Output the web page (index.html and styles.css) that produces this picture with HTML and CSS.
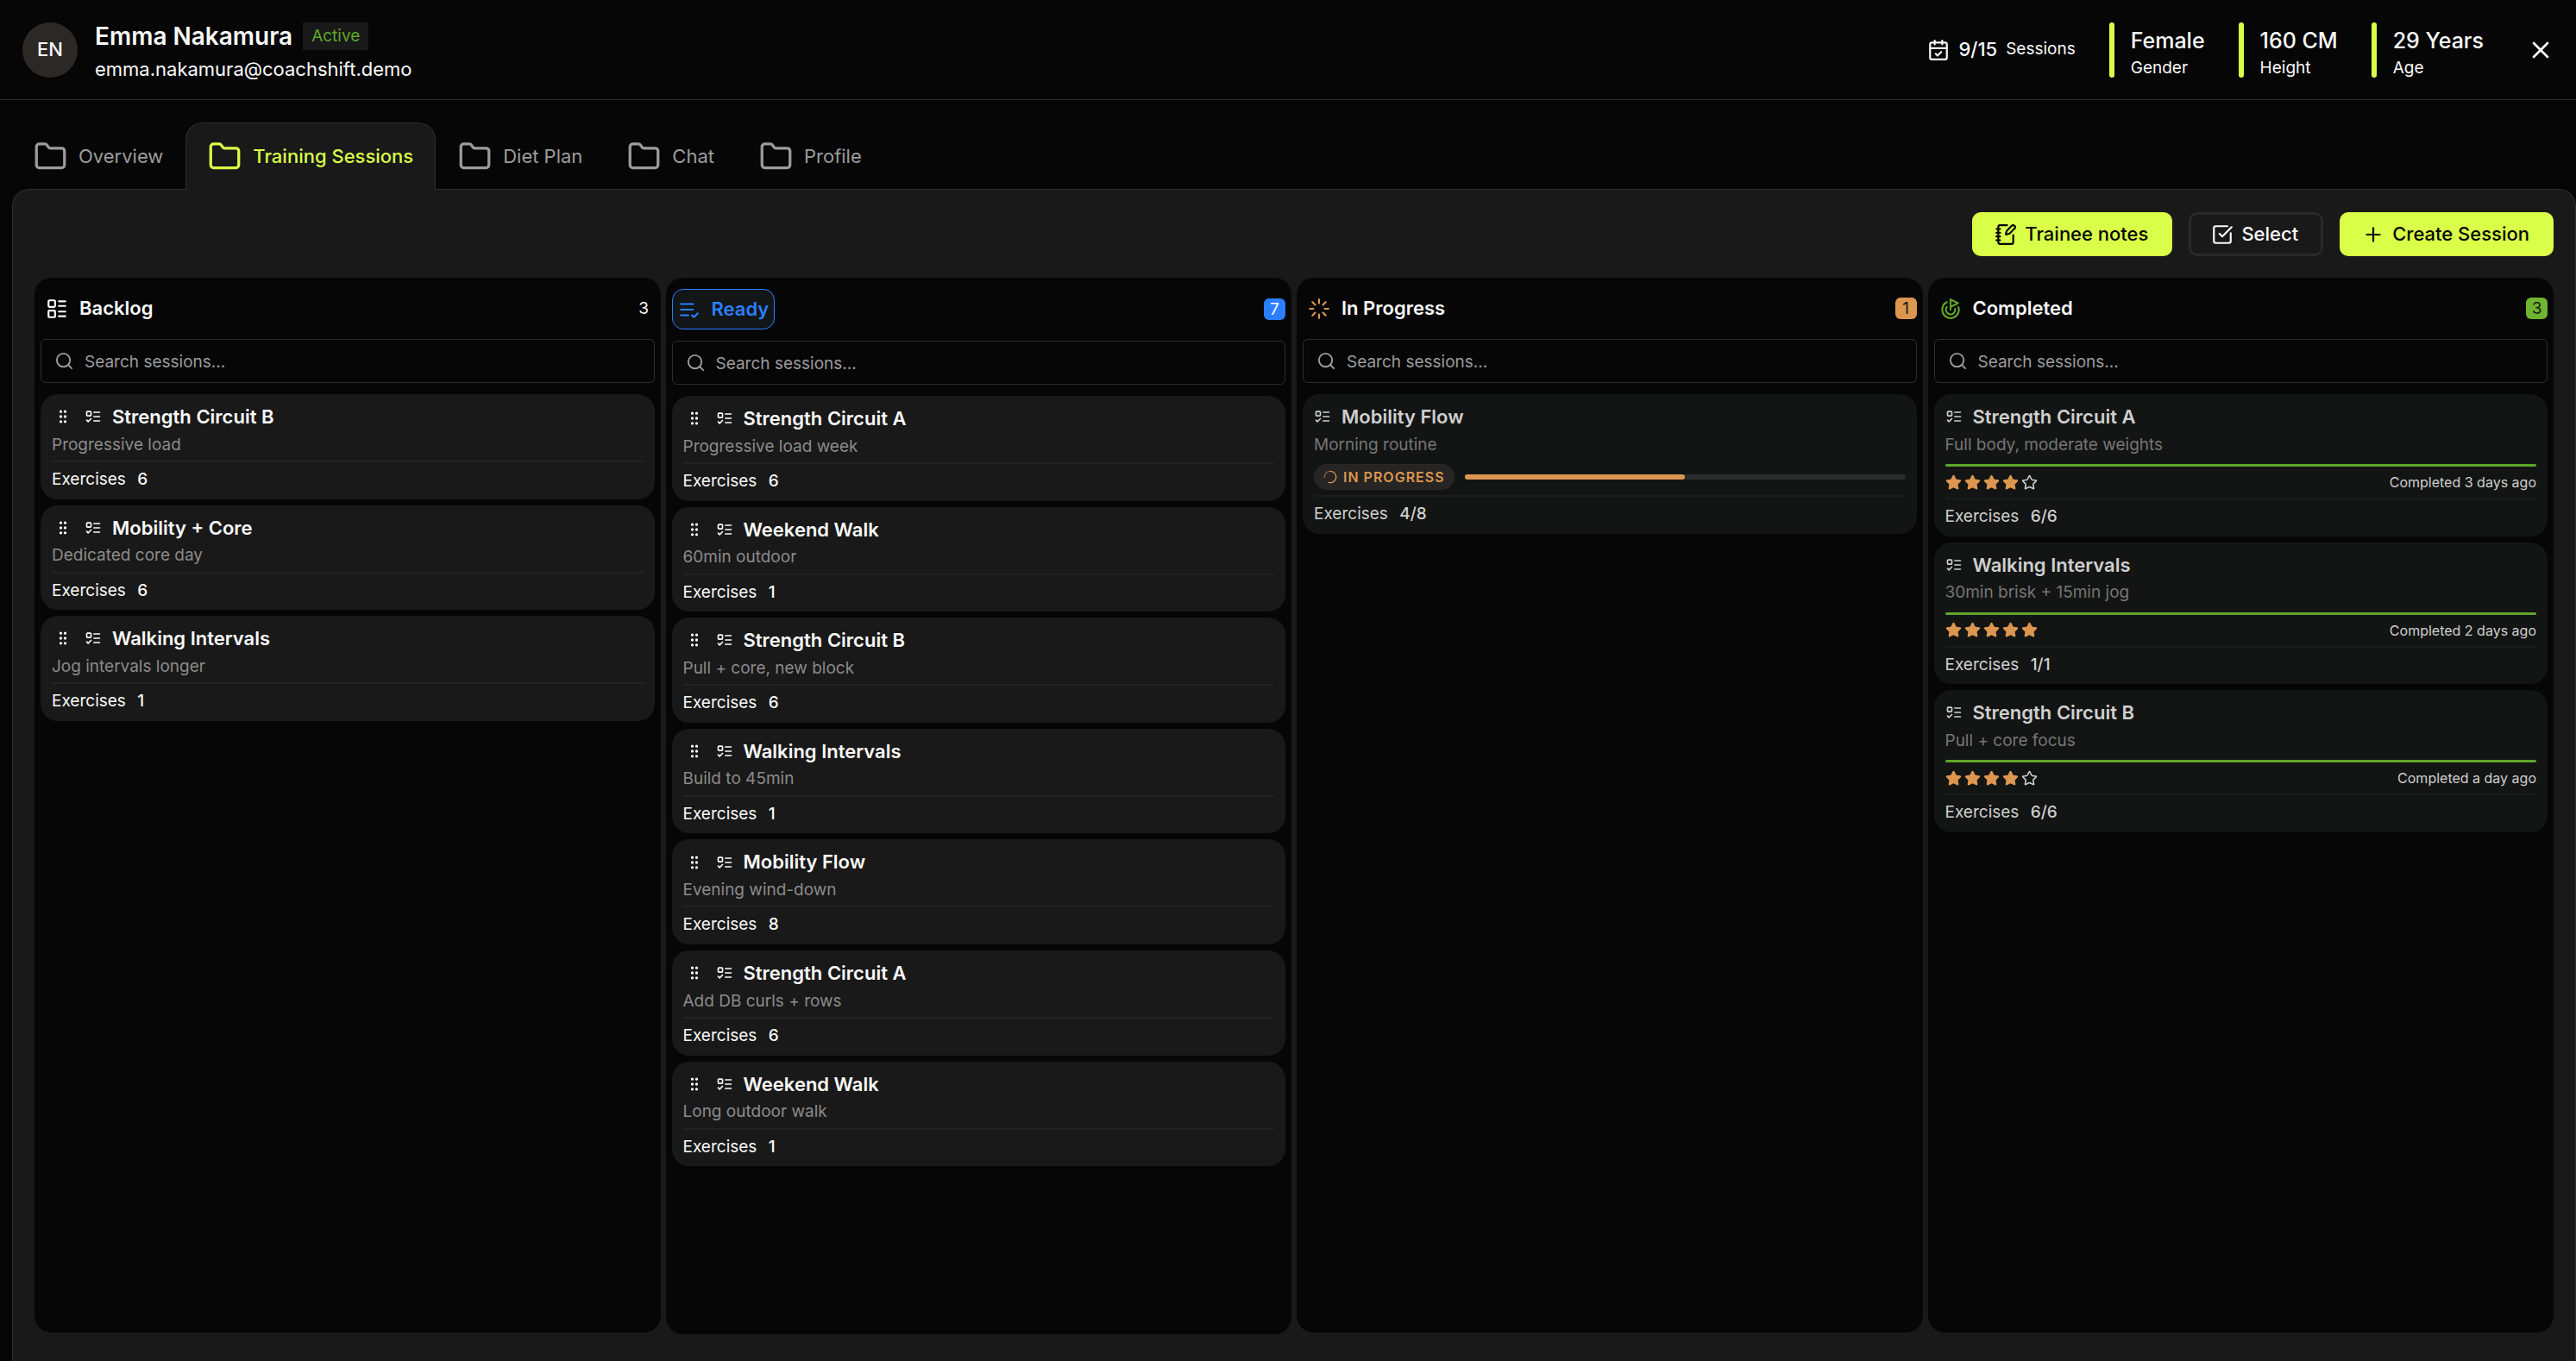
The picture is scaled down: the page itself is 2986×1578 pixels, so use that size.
FILE: index.html
```html
<!DOCTYPE html>
<html lang="en">
<head>
    <meta charset="UTF-8">
    <meta name="viewport" content="width=device-width, initial-scale=1.0">
    <title>Emma Nakamura - Training Sessions</title>
    <link rel="stylesheet" href="styles.css">
</head>
<body>
    <!-- shared icons -->
    <svg class="sprite" aria-hidden="true">
        <symbol id="i-folder" viewBox="0 0 24 24"><path d="M20 20a2 2 0 0 0 2-2V8a2 2 0 0 0-2-2h-7.900a2 2 0 0 1-1.690-.900L9.600 3.900A2 2 0 0 0 7.930 3H4a2 2 0 0 0-2 2v13a2 2 0 0 0 2 2Z"/></symbol>
        <symbol id="i-search" viewBox="0 0 24 24"><circle cx="11" cy="11" r="8"/><path d="m21 21-4.300-4.300"/></symbol>
        <symbol id="i-grip" viewBox="0 0 24 24"><circle cx="9" cy="12" r="1"/><circle cx="9" cy="5" r="1"/><circle cx="9" cy="19" r="1"/><circle cx="15" cy="12" r="1"/><circle cx="15" cy="5" r="1"/><circle cx="15" cy="19" r="1"/></symbol>
        <symbol id="i-todo" viewBox="0 0 24 24"><rect x="3" y="5" width="6" height="6" rx="1"/><path d="m3 17 2 2 4-4"/><path d="M13 6h8"/><path d="M13 12h8"/><path d="M13 18h8"/></symbol>
        <symbol id="i-star" viewBox="0 0 24 24"><path d="M11.525 2.295a.53.53 0 0 1 .95 0l2.310 4.679a2.123 2.123 0 0 0 1.595 1.160l5.166.756a.53.53 0 0 1 .294.904l-3.736 3.638a2.123 2.123 0 0 0-.611 1.878l.882 5.140a.53.53 0 0 1-.771.560l-4.618-2.428a2.122 2.122 0 0 0-1.973 0L6.396 21.010a.53.53 0 0 1-.770-.560l.881-5.139a2.122 2.122 0 0 0-.611-1.879L2.160 9.795a.53.53 0 0 1 .294-.906l5.165-.755a2.122 2.122 0 0 0 1.597-1.160z"/></symbol>
    </svg>

    <header class="header">
        <div class="avatar">EN</div>
        <div class="person">
            <div class="person-top">
                <h1>Emma Nakamura</h1>
                <span class="status">Active</span>
            </div>
            <p class="email">emma.nakamura@coachshift.demo</p>
        </div>
        <div class="stats">
            <div class="session-count">
                <svg class="icon" viewBox="0 0 24 24"><path d="M8 2v4"/><path d="M16 2v4"/><rect width="18" height="18" x="3" y="4" rx="2"/><path d="M3 10h18"/><path d="m9 16 2 2 4-4"/></svg>
                <strong>9/15</strong>
                <span>Sessions</span>
            </div>
            <div class="stat"><strong>Female</strong><span>Gender</span></div>
            <div class="stat"><strong>160 CM</strong><span>Height</span></div>
            <div class="stat"><strong>29 Years</strong><span>Age</span></div>
        </div>
        <button class="close" type="button" aria-label="Close">
            <svg class="icon" viewBox="0 0 24 24"><path d="M18 6 6 18"/><path d="m6 6 12 12"/></svg>
        </button>
    </header>

    <nav class="tabs">
        <a class="tab" href="#"><svg class="icon"><use href="#i-folder"/></svg>Overview</a>
        <a class="tab active" href="#"><svg class="icon"><use href="#i-folder"/></svg>Training Sessions</a>
        <a class="tab" href="#"><svg class="icon"><use href="#i-folder"/></svg>Diet Plan</a>
        <a class="tab" href="#"><svg class="icon"><use href="#i-folder"/></svg>Chat</a>
        <a class="tab" href="#"><svg class="icon"><use href="#i-folder"/></svg>Profile</a>
    </nav>

    <main class="panel">
        <div class="actions">
            <button class="btn primary" type="button">
                <svg class="icon" viewBox="0 0 24 24"><path d="M13.400 2H6a2 2 0 0 0-2 2v16a2 2 0 0 0 2 2h12a2 2 0 0 0 2-2v-7.400"/><path d="M2 6h4"/><path d="M2 10h4"/><path d="M2 14h4"/><path d="M2 18h4"/><path d="M21.378 5.626a1 1 0 1 0-3.004-3.004l-5.010 5.012a2 2 0 0 0-.506.854l-.837 2.870a.5.5 0 0 0 .620.620l2.870-.837a2 2 0 0 0 .854-.506z"/></svg>
                Trainee notes
            </button>
            <button class="btn outline" type="button">
                <svg class="icon" viewBox="0 0 24 24"><path d="M21 10.500V19a2 2 0 0 1-2 2H5a2 2 0 0 1-2-2V5a2 2 0 0 1 2-2h12.500"/><path d="m9 11 3 3L22 4"/></svg>
                Select
            </button>
            <button class="btn primary" type="button">
                <svg class="icon" viewBox="0 0 24 24"><path d="M5 12h14"/><path d="M12 5v14"/></svg>
                Create Session
            </button>
        </div>

        <div class="board">
            <section class="column">
                <div class="column-head">
                    <h2 class="column-title">
                        <svg class="icon" viewBox="0 0 24 24"><rect width="7" height="7" x="3" y="3" rx="1"/><rect width="7" height="7" x="3" y="14" rx="1"/><path d="M14 4h7"/><path d="M14 9h7"/><path d="M14 15h7"/><path d="M14 20h7"/></svg>
                        Backlog
                    </h2>
                    <span class="count">3</span>
                </div>
                <label class="search">
                    <svg class="icon"><use href="#i-search"/></svg>
                    <input type="search" placeholder="Search sessions..." aria-label="Search backlog sessions">
                </label>
                <div class="cards">
                    <article class="card">
                        <div class="card-top">
                            <button class="grip" type="button" aria-label="Drag"><svg class="icon"><use href="#i-grip"/></svg></button>
                            <svg class="icon"><use href="#i-todo"/></svg>
                            <h3>Strength Circuit B</h3>
                        </div>
                        <p class="note">Progressive load</p>
                        <p class="exercises">Exercises <b>6</b></p>
                    </article>
                    <article class="card">
                        <div class="card-top">
                            <button class="grip" type="button" aria-label="Drag"><svg class="icon"><use href="#i-grip"/></svg></button>
                            <svg class="icon"><use href="#i-todo"/></svg>
                            <h3>Mobility + Core</h3>
                        </div>
                        <p class="note">Dedicated core day</p>
                        <p class="exercises">Exercises <b>6</b></p>
                    </article>
                    <article class="card">
                        <div class="card-top">
                            <button class="grip" type="button" aria-label="Drag"><svg class="icon"><use href="#i-grip"/></svg></button>
                            <svg class="icon"><use href="#i-todo"/></svg>
                            <h3>Walking Intervals</h3>
                        </div>
                        <p class="note">Jog intervals longer</p>
                        <p class="exercises">Exercises <b>1</b></p>
                    </article>
                </div>
            </section>

            <section class="column">
                <div class="column-head">
                    <button class="column-title selected" type="button">
                        <svg class="icon" viewBox="0 0 24 24"><path d="M11 18H3"/><path d="m15 18 2 2 4-4"/><path d="M16 12H3"/><path d="M16 6H3"/></svg>
                        Ready
                    </button>
                    <span class="count blue">7</span>
                </div>
                <label class="search">
                    <svg class="icon"><use href="#i-search"/></svg>
                    <input type="search" placeholder="Search sessions..." aria-label="Search ready sessions">
                </label>
                <div class="cards">
                    <article class="card">
                        <div class="card-top">
                            <button class="grip" type="button" aria-label="Drag"><svg class="icon"><use href="#i-grip"/></svg></button>
                            <svg class="icon"><use href="#i-todo"/></svg>
                            <h3>Strength Circuit A</h3>
                        </div>
                        <p class="note">Progressive load week</p>
                        <p class="exercises">Exercises <b>6</b></p>
                    </article>
                    <article class="card">
                        <div class="card-top">
                            <button class="grip" type="button" aria-label="Drag"><svg class="icon"><use href="#i-grip"/></svg></button>
                            <svg class="icon"><use href="#i-todo"/></svg>
                            <h3>Weekend Walk</h3>
                        </div>
                        <p class="note">60min outdoor</p>
                        <p class="exercises">Exercises <b>1</b></p>
                    </article>
                    <article class="card">
                        <div class="card-top">
                            <button class="grip" type="button" aria-label="Drag"><svg class="icon"><use href="#i-grip"/></svg></button>
                            <svg class="icon"><use href="#i-todo"/></svg>
                            <h3>Strength Circuit B</h3>
                        </div>
                        <p class="note">Pull + core, new block</p>
                        <p class="exercises">Exercises <b>6</b></p>
                    </article>
                    <article class="card">
                        <div class="card-top">
                            <button class="grip" type="button" aria-label="Drag"><svg class="icon"><use href="#i-grip"/></svg></button>
                            <svg class="icon"><use href="#i-todo"/></svg>
                            <h3>Walking Intervals</h3>
                        </div>
                        <p class="note">Build to 45min</p>
                        <p class="exercises">Exercises <b>1</b></p>
                    </article>
                    <article class="card">
                        <div class="card-top">
                            <button class="grip" type="button" aria-label="Drag"><svg class="icon"><use href="#i-grip"/></svg></button>
                            <svg class="icon"><use href="#i-todo"/></svg>
                            <h3>Mobility Flow</h3>
                        </div>
                        <p class="note">Evening wind-down</p>
                        <p class="exercises">Exercises <b>8</b></p>
                    </article>
                    <article class="card">
                        <div class="card-top">
                            <button class="grip" type="button" aria-label="Drag"><svg class="icon"><use href="#i-grip"/></svg></button>
                            <svg class="icon"><use href="#i-todo"/></svg>
                            <h3>Strength Circuit A</h3>
                        </div>
                        <p class="note">Add DB curls + rows</p>
                        <p class="exercises">Exercises <b>6</b></p>
                    </article>
                    <article class="card">
                        <div class="card-top">
                            <button class="grip" type="button" aria-label="Drag"><svg class="icon"><use href="#i-grip"/></svg></button>
                            <svg class="icon"><use href="#i-todo"/></svg>
                            <h3>Weekend Walk</h3>
                        </div>
                        <p class="note">Long outdoor walk</p>
                        <p class="exercises">Exercises <b>1</b></p>
                    </article>
                </div>
            </section>

            <section class="column">
                <div class="column-head">
                    <h2 class="column-title">
                        <svg class="icon orange-icon" viewBox="0 0 24 24"><path d="M12 2v4"/><path d="m16.200 7.800 2.900-2.900"/><path d="M18 12h4"/><path d="m16.200 16.200 2.900 2.900"/><path d="M12 18v4"/><path d="m4.900 19.100 2.900-2.900"/><path d="M2 12h4"/><path d="m4.900 4.900 2.900 2.900"/></svg>
                        In Progress
                    </h2>
                    <span class="count orange">1</span>
                </div>
                <label class="search">
                    <svg class="icon"><use href="#i-search"/></svg>
                    <input type="search" placeholder="Search sessions..." aria-label="Search sessions in progress">
                </label>
                <div class="cards">
                    <article class="card locked">
                        <div class="card-top">
                            <svg class="icon"><use href="#i-todo"/></svg>
                            <h3>Mobility Flow</h3>
                        </div>
                        <p class="note">Morning routine</p>
                        <div class="progress">
                            <span class="pill">
                                <svg class="icon" viewBox="0 0 24 24"><path d="M2 13A10 10 0 0 1 12 2"/><path d="M12 2a10 10 0 1 1-3 19.500" /></svg>
                                IN PROGRESS
                            </span>
                            <div class="track"><div class="fill" style="width: 50%"></div></div>
                        </div>
                        <p class="exercises">Exercises <b>4/8</b></p>
                    </article>
                </div>
            </section>

            <section class="column">
                <div class="column-head">
                    <h2 class="column-title">
                        <svg class="icon green-icon" viewBox="0 0 24 24"><path d="M12 13V2l8 4-8 4"/><path d="M20.561 10.222a9 9 0 1 1-12.550-5.290"/><path d="M8.002 9.997a5 5 0 1 0 8.900 2.020"/></svg>
                        Completed
                    </h2>
                    <span class="count green">3</span>
                </div>
                <label class="search">
                    <svg class="icon"><use href="#i-search"/></svg>
                    <input type="search" placeholder="Search sessions..." aria-label="Search completed sessions">
                </label>
                <div class="cards">
                    <article class="card locked">
                        <div class="card-top">
                            <svg class="icon"><use href="#i-todo"/></svg>
                            <h3>Strength Circuit A</h3>
                        </div>
                        <p class="note">Full body, moderate weights</p>
                        <div class="done-bar"></div>
                        <div class="rating">
                            <svg class="icon full"><use href="#i-star"/></svg>
                            <svg class="icon full"><use href="#i-star"/></svg>
                            <svg class="icon full"><use href="#i-star"/></svg>
                            <svg class="icon full"><use href="#i-star"/></svg>
                            <svg class="icon"><use href="#i-star"/></svg>
                            <time>Completed 3 days ago</time>
                        </div>
                        <p class="exercises">Exercises <b>6/6</b></p>
                    </article>
                    <article class="card locked">
                        <div class="card-top">
                            <svg class="icon"><use href="#i-todo"/></svg>
                            <h3>Walking Intervals</h3>
                        </div>
                        <p class="note">30min brisk + 15min jog</p>
                        <div class="done-bar"></div>
                        <div class="rating">
                            <svg class="icon full"><use href="#i-star"/></svg>
                            <svg class="icon full"><use href="#i-star"/></svg>
                            <svg class="icon full"><use href="#i-star"/></svg>
                            <svg class="icon full"><use href="#i-star"/></svg>
                            <svg class="icon full"><use href="#i-star"/></svg>
                            <time>Completed 2 days ago</time>
                        </div>
                        <p class="exercises">Exercises <b>1/1</b></p>
                    </article>
                    <article class="card locked">
                        <div class="card-top">
                            <svg class="icon"><use href="#i-todo"/></svg>
                            <h3>Strength Circuit B</h3>
                        </div>
                        <p class="note">Pull + core focus</p>
                        <div class="done-bar"></div>
                        <div class="rating">
                            <svg class="icon full"><use href="#i-star"/></svg>
                            <svg class="icon full"><use href="#i-star"/></svg>
                            <svg class="icon full"><use href="#i-star"/></svg>
                            <svg class="icon full"><use href="#i-star"/></svg>
                            <svg class="icon"><use href="#i-star"/></svg>
                            <time>Completed a day ago</time>
                        </div>
                        <p class="exercises">Exercises <b>6/6</b></p>
                    </article>
                </div>
            </section>
        </div>
    </main>
</body>
</html>
```
FILE: styles.css
```css
* {
    box-sizing: border-box;
}

body {
    margin: 0;
    min-height: 100vh;
    background: #060606;
    color: #fafafa;
    font-family: Inter, "Liberation Sans", sans-serif;
    font-size: 22px;
    line-height: 1.5;
}

h1, h2, h3, p {
    margin: 0;
}

button, input {
    font: inherit;
    color: inherit;
}

button {
    cursor: pointer;
}

a {
    text-decoration: none;
}

.sprite {
    display: none;
}

.icon {
    width: 26px;
    height: 26px;
    flex: none;
    fill: none;
    stroke: currentColor;
    stroke-width: 2;
    stroke-linecap: round;
    stroke-linejoin: round;
}

/* header */
.header {
    display: flex;
    align-items: center;
    height: 116px;
    padding: 0 25px 0 26px;
    border-bottom: 1px solid #2a2a2a;
}

.avatar {
    width: 64px;
    height: 64px;
    border-radius: 50%;
    background: #2b2826;
    display: flex;
    align-items: center;
    justify-content: center;
    font-weight: 500;
}

.person {
    margin-left: 20px;
    padding-top: 2px;
}

.person-top {
    display: flex;
    align-items: center;
    gap: 12px;
    height: 32px;
    margin-bottom: 11px;
}

.person h1 {
    font-size: 28px;
    font-weight: 600;
    line-height: 32px;
}

.status {
    padding: 0 10px;
    background: #191919;
    color: #5fa52b;
    font-size: 19px;
    line-height: 32px;
}

.email {
    line-height: 22px;
}

.stats {
    display: flex;
    align-items: center;
    gap: 39px;
    margin-left: auto;
}

.session-count {
    display: flex;
    align-items: center;
    gap: 10px;
}

.session-count strong {
    font-weight: 500;
}

.session-count span {
    font-size: 19px;
}

.stat {
    position: relative;
    display: flex;
    flex-direction: column;
    justify-content: center;
    height: 64px;
    padding: 3px 0 0 25px;
}

.stat::before {
    content: "";
    position: absolute;
    left: 0;
    top: 0;
    bottom: 0;
    width: 6px;
    border-radius: 3px;
    background: #d9ff48;
}

.stat strong {
    font-size: 25px;
    font-weight: 500;
    line-height: 38px;
}

.stat span {
    font-size: 19px;
    line-height: 25px;
}

.close {
    margin-left: 50px;
    padding: 0;
    border: none;
    background: none;
    display: flex;
}

.close .icon {
    width: 32px;
    height: 32px;
}

/* tabs */
.tabs {
    display: flex;
    padding: 26px 13px 0;
}

.tab {
    display: flex;
    align-items: center;
    gap: 13px;
    height: 78px;
    margin-bottom: -1px;
    padding: 0 25px;
    border: 1px solid transparent;
    border-bottom: none;
    border-radius: 20px 20px 0 0;
    color: #9c9c9c;
    z-index: 1;
}

.tab .icon {
    width: 39px;
    height: 39px;
}

.tab.active {
    background: #191919;
    border-color: #2e2e2e;
    color: #d9ff48;
    font-weight: 500;
}

/* panel */
.panel {
    min-height: calc(100vh - 219px);
    margin-left: 14px;
    padding: 26px 25px 31px;
    background: #191919;
    border: 1px solid #2e2e2e;
    border-bottom: none;
    border-radius: 20px 20px 0 0;
}

.actions {
    display: flex;
    justify-content: flex-end;
    gap: 19px;
    margin-bottom: 25px;
}

.btn {
    display: flex;
    align-items: center;
    gap: 9px;
    height: 51px;
    padding: 0 28px 0 26px;
    border: none;
    border-radius: 10px;
    font-weight: 500;
}

.primary {
    background: #d9ff48;
    color: #060606;
}

.outline {
    padding: 0 26px 0 23px;
    background: transparent;
    border: 3px solid #2b2826;
}

/* board */
.board {
    display: grid;
    grid-template-columns: repeat(4, minmax(0, 1fr));
    align-items: start;
    gap: 6px;
}

.column {
    padding: 13px 7px 7px;
    background: #060606;
    border-radius: 20px;
}

.column-head {
    display: flex;
    align-items: center;
    justify-content: space-between;
    margin-bottom: 13px;
}

.column-title {
    display: flex;
    align-items: center;
    gap: 13px;
    padding: 6px;
    font-size: 22px;
    font-weight: 600;
    line-height: 33px;
}

.selected {
    background: #121616;
    border: 1px solid #2b7fff;
    border-radius: 13px;
    color: #2b7fff;
}

.orange-icon {
    color: #dd9650;
}

.green-icon {
    color: #5fa52b;
}

.count {
    width: 25px;
    border-radius: 6px;
    font-size: 19px;
    line-height: 25px;
    text-align: center;
}

.blue {
    background: #2b7fff;
}

.orange {
    background: #dd9650;
    color: #191919;
}

.green {
    background: #6fb52f;
    color: #191919;
}

.search {
    display: flex;
    align-items: center;
    gap: 12px;
    height: 51px;
    margin-bottom: 13px;
    padding: 0 15px;
    border: 1px solid #2e2e2e;
    border-radius: 6px;
    color: #9c9c9c;
}

.search .icon {
    width: 23px;
    height: 23px;
}

.search input {
    flex: 1;
    min-width: 0;
    padding: 3px 0 0;
    border: none;
    outline: none;
    background: none;
    font-size: 19px;
}

.search input::placeholder {
    color: #9c9c9c;
}

.cards {
    display: flex;
    flex-direction: column;
    gap: 7px;
    min-height: calc(100vh - 497px);
}

.card {
    padding: 12px 13px 8px;
    background: #191919;
    border-radius: 20px;
}

.card-top {
    display: flex;
    align-items: center;
    gap: 12px;
    margin-bottom: 4px;
}

.card-top h3 {
    font-size: 22px;
    font-weight: 600;
    line-height: 1.3;
}

.card-top .icon {
    width: 20px;
    height: 20px;
}

.grip {
    display: flex;
    padding: 3px;
    border: none;
    background: none;
}

.note {
    margin-bottom: 4px;
    color: #8b8b8b;
    font-size: 19px;
}

.exercises {
    padding-top: 6px;
    border-top: 2px solid #222222;
    font-size: 19px;
}

.exercises b {
    margin-left: 8px;
    font-weight: 500;
}

/* cards that can no longer be moved */
.locked {
    background: #131514;
    color: #cfcfcf;
}

.locked .note {
    margin-bottom: 8px;
    color: #757575;
}

.locked .exercises {
    border-color: #1b1d1c;
}

.progress {
    display: flex;
    align-items: center;
    gap: 12px;
    margin-bottom: 6px;
}

.pill {
    display: flex;
    align-items: center;
    gap: 7px;
    height: 30px;
    padding: 0 10px;
    border: 1px solid #2b2826;
    border-radius: 15px;
    background: #262523;
    color: #dd9650;
    font-size: 16px;
    font-weight: 600;
    letter-spacing: 1px;
}

.pill .icon {
    width: 16px;
    height: 16px;
}

.pill .icon path:first-child {
    opacity: 0.5;
}

.track {
    flex: 1;
    height: 6px;
    border-radius: 3px;
    background: #2b2d2c;
}

.fill {
    height: 6px;
    border-radius: 3px;
    background: #dd9650;
}

.done-bar {
    height: 3px;
    border-radius: 2px;
    background: #5fa52b;
}

.rating {
    display: flex;
    align-items: center;
    gap: 3px;
    height: 36px;
}

.rating .icon {
    width: 19px;
    height: 19px;
}

.rating .full {
    color: #dd9650;
    fill: currentColor;
}

.rating time {
    margin-left: auto;
    font-size: 16px;
}
```
